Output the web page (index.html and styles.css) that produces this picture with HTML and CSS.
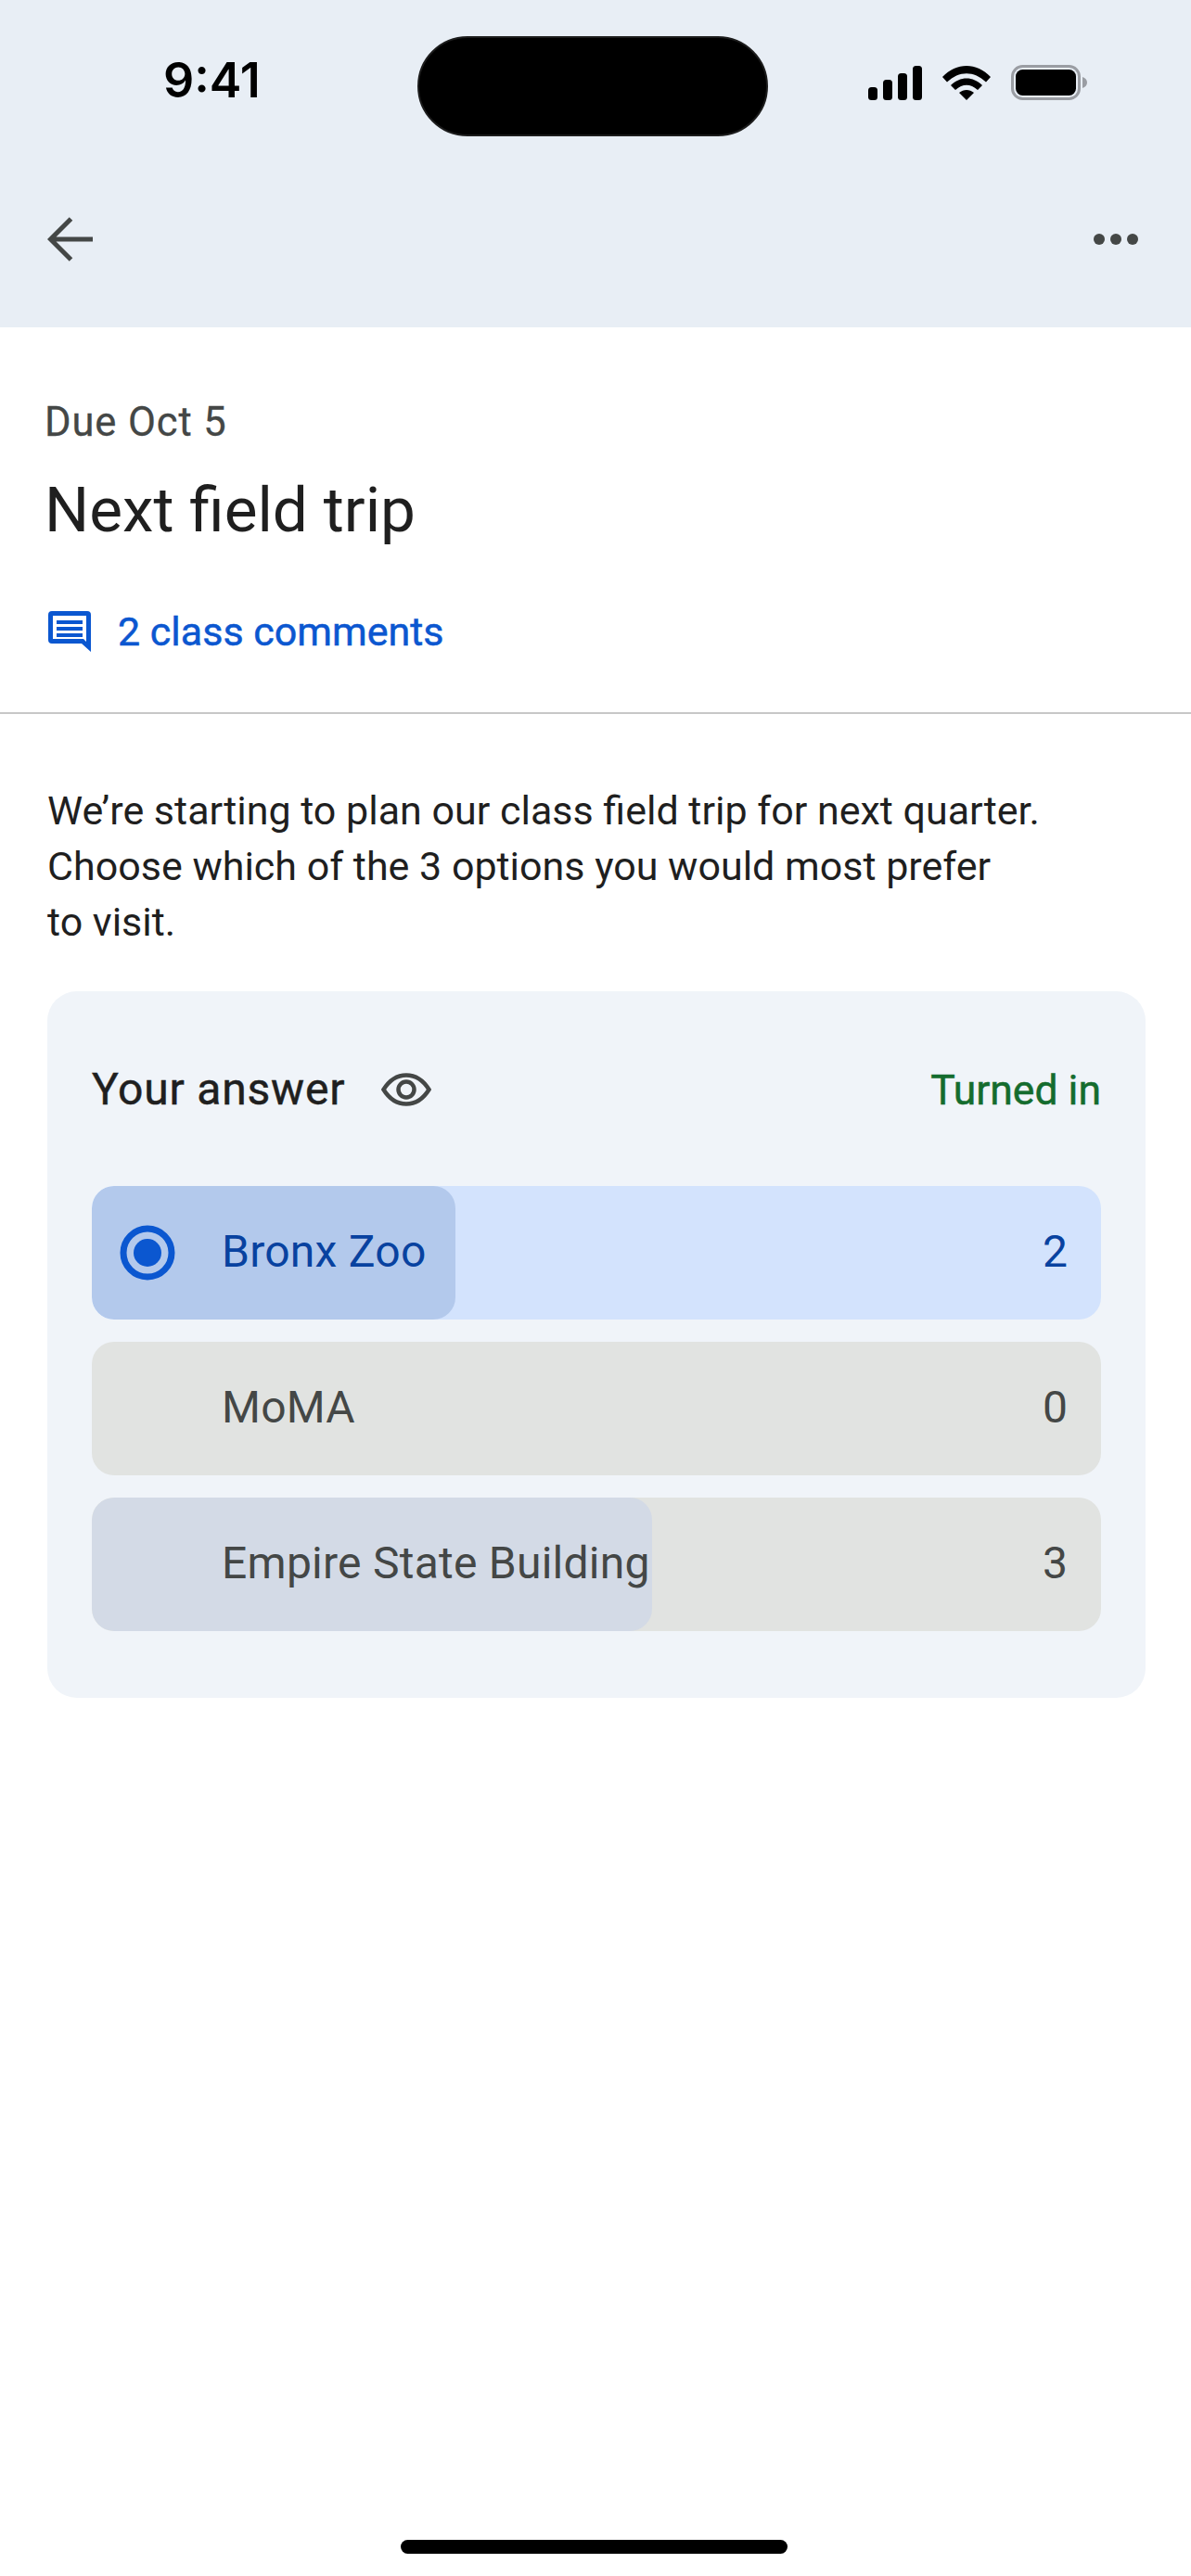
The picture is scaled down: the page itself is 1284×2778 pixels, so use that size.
FILE: index.html
```html
<!DOCTYPE html>
<html lang="en">
<head>
<meta charset="utf-8">
<title>Next field trip</title>
<link rel="stylesheet" href="styles.css">
</head>
<body>
<div class="screen">
  <header class="top">
    <div class="status">
      <span class="time">9:41</span>
      <div class="island"></div>
      <div class="status-icons">
        <svg class="sig" width="58" height="37" viewBox="0 0 58 37"><rect x="0" y="23" width="10" height="14" rx="3.5"/><rect x="16" y="15" width="10" height="22" rx="3.5"/><rect x="32" y="8" width="10" height="29" rx="3.5"/><rect x="48" y="0" width="10" height="37" rx="3.5"/></svg>
        <svg class="wifi" width="52" height="37" viewBox="0 0 52 37"><path d="M0 12 C15 -4 37 -4 52 12 L47 17.5 C34 5 18 5 5 17.5Z"/><path d="M9 21 C19 11 33 11 43 21 L38 26 C30 19 22 19 14 26Z"/><path d="M18 29 C23 25 29 25 34 29 L26 37Z"/></svg>
        <svg class="batt" width="82" height="38" viewBox="0 0 82 38"><rect x="1.500" y="1.500" width="72" height="35" rx="11" fill="none" stroke="#9a9da3" stroke-width="3"/><rect x="5" y="5" width="65" height="28" rx="7.500"/><path d="M77 13 C80 14 82 16 82 19 C82 22 80 24 77 25Z" fill="#9a9da3"/></svg>
      </div>
    </div>
    <div class="toolbar">
      <svg width="50" height="48" viewBox="0 0 50 48"><path d="M49 24H5M25.500 2L3.500 24L25.500 46" fill="none" stroke="#444746" stroke-width="5"/></svg>
      <svg width="48" height="14" viewBox="0 0 48 14" fill="#444746"><circle cx="6" cy="7" r="6"/><circle cx="24" cy="7" r="6"/><circle cx="42" cy="7" r="6"/></svg>
    </div>
  </header>

  <section class="head">
    <div class="due">Due Oct 5</div>
    <h1 class="title">Next field trip</h1>
    <div class="comments">
      <svg width="46" height="44" viewBox="0 0 46 44"><path fill-rule="evenodd" fill="#0b57d0" d="M4 0H42A4 4 0 0 1 46 4V44L36 35H4A4 4 0 0 1 0 31V4A4 4 0 0 1 4 0ZM5 5V30H38L41 33V5Z"/><path fill="#0b57d0" d="M9 10H37V14H9ZM9 17H37V21H9ZM9 24H37V28H9Z"/></svg>
      <span>2 class comments</span>
    </div>
  </section>

  <main class="body">
    <p class="desc">We’re starting to plan our class field trip for next quarter.<br>Choose which of the 3 options you would most prefer<br>to visit.</p>
    <section class="card">
      <div class="card-head">
        <div class="answer">
          <span class="answer-label">Your answer</span>
          <svg width="54" height="36" viewBox="0 0 54 36"><path d="M2.500 18C9 7.500 17 2.500 27 2.500S45 7.500 51.500 18C45 28.500 37 33.500 27 33.500S9 28.500 2.500 18Z" fill="none" stroke="#444746" stroke-width="4.500"/><circle cx="27" cy="18" r="8.500" fill="none" stroke="#444746" stroke-width="4.500"/></svg>
        </div>
        <span class="turned">Turned in</span>
      </div>
      <div class="options">
        <div class="option selected">
          <div class="fill" style="width:392px"></div>
          <svg class="radio" width="60" height="60" viewBox="0 0 60 60"><circle cx="30" cy="30" r="26" fill="none" stroke="#0b57d0" stroke-width="7"/><circle cx="30" cy="30" r="15" fill="#0b57d0"/></svg>
          <span class="label">Bronx Zoo</span>
          <span class="count">2</span>
        </div>
        <div class="option">
          <span class="label">MoMA</span>
          <span class="count">0</span>
        </div>
        <div class="option">
          <div class="fill" style="width:604px"></div>
          <span class="label">Empire State Building</span>
          <span class="count">3</span>
        </div>
      </div>
    </section>
  </main>
  <div class="home"></div>
</div>
</body>
</html>
```
FILE: styles.css
```css
* { box-sizing: border-box; }
html, body { margin: 0; padding: 0; background: #fff; }
.screen {
  width: 1284px;
  height: 2778px;
  display: flex;
  flex-direction: column;
  font-family: Roboto, "Noto Sans", sans-serif;
  color: #1f1f1f;
  overflow: hidden;
}
.top { height: 353px; background: #e8eef5; flex: none; }
.status {
  height: 147px;
  padding-top: 39px;
  display: flex;
  align-items: flex-start;
}
.time {
  margin-left: 176px;
  width: 274px;
  margin-top: 18px;
  font: 600 52px/60px Inter, "Liberation Sans", sans-serif;
  color: #000;
  white-space: nowrap;
}
.island { width: 378px; height: 108px; border-radius: 54px; background: #000; border: 2px solid #1c1c1c; flex: none; }
.status-icons {
  margin-left: 108px;
  margin-top: 31px;
  display: flex;
  align-items: center;
  gap: 22px;
}
.status-icons svg { display: block; flex: none; }
.toolbar {
  height: 206px;
  padding: 87px 57px 0 51px;
  display: flex;
  justify-content: space-between;
  align-items: flex-start;
}
.toolbar svg:last-child { margin-top: 17px; }
.head { height: 417px; padding: 78px 48px 0; border-bottom: 2px solid #c7c7c7; flex: none; }
.due { font-size: 43.500px; line-height: 50px; color: #444746; letter-spacing: 0.900px; -webkit-text-stroke: 0.300px #444746; }
.title { margin: 29px 0 0; font-size: 67.500px; line-height: 80px; font-weight: 400; color: #1f1f1f; }
.comments { margin-top: 66px; display: flex; align-items: center; gap: 29px; padding-left: 4px; color: #0b57d0; font-size: 43px; line-height: 50px; font-weight: 400; -webkit-text-stroke: 0.500px #0b57d0; }
.body { padding: 0 49px 0 51px; flex: 1; }
.desc { margin: 74px 0 0; font-size: 43px; line-height: 60px; color: #1f1f1f; white-space: nowrap; }
.card {
  margin-top: 45px;
  height: 762px;
  border-radius: 32px;
  background: #f0f4f9;
  padding: 72px 48px 72px 48px;
}
.card-head { height: 138px; display: flex; justify-content: space-between; align-items: flex-start; }
.answer { display: flex; align-items: center; gap: 39px; height: 46px; margin-top: 11px; }
.answer-label { font-size: 48px; line-height: 46px; font-weight: 400; letter-spacing: 0.800px; color: #1f1f1f; -webkit-text-stroke: 0.500px #1f1f1f; }
.turned { font-size: 44.500px; line-height: 46px; color: #146c2e; font-weight: 400; margin-top: 12px; -webkit-text-stroke: 0.500px #146c2e; }
.options { display: flex; flex-direction: column; gap: 24px; }
.option {
  position: relative;
  height: 144px;
  border-radius: 24px;
  background: #e1e3e1;
  display: flex;
  align-items: center;
  padding: 0 36px 3px 140px;
  color: #444746;
  font-size: 48px;
  overflow: hidden;
}
.option.selected { background: #d3e3fd; color: #0842a0; }
.fill { position: absolute; left: 0; top: 0; bottom: 0; background: #d3dae6; border-radius: 24px; }
.selected .fill { background: #b3c9ec; }
.radio { position: absolute; left: 30px; top: 42px; }
.label { position: relative; flex: 1; white-space: nowrap; letter-spacing: 0.250px; }
.count { position: relative; }
.home { width: 417px; height: 15px; border-radius: 8px; background: #000; margin: 0 0 24px 432px; flex: none; }
```
